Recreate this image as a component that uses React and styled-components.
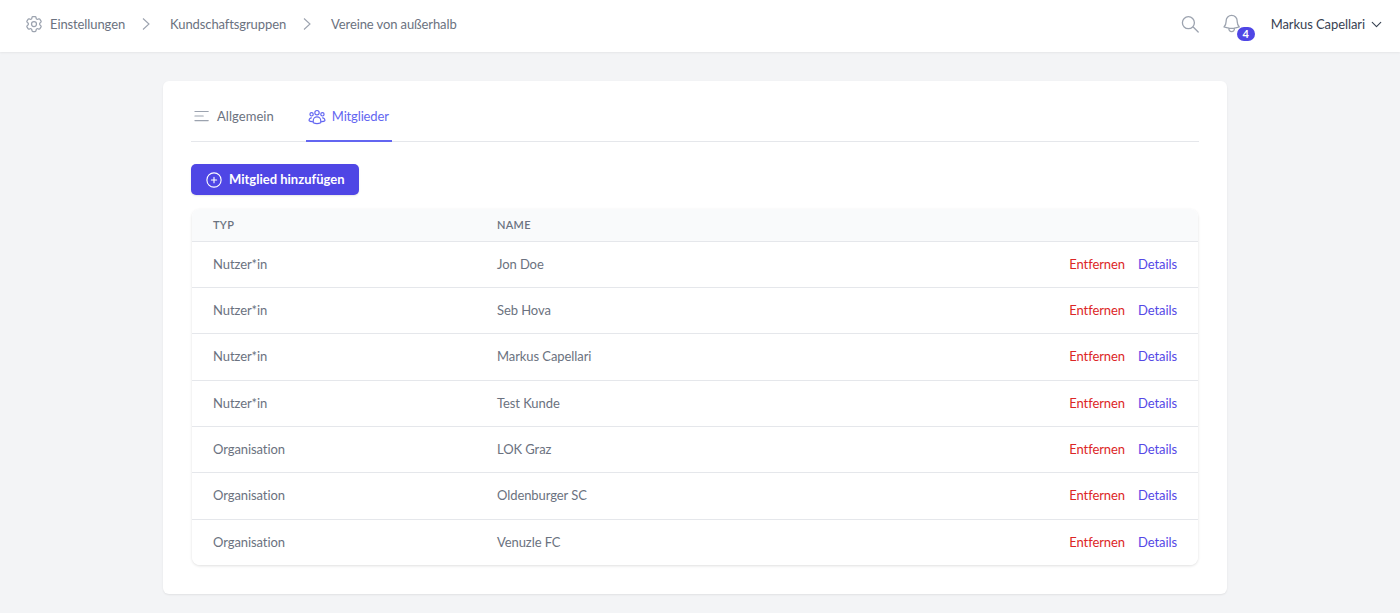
import React from "react";
import styled, { createGlobalStyle } from "styled-components";
import { ChevronDown } from "lucide-react";

const members = [
  { type: "Nutzer*in", name: "Jon Doe" },
  { type: "Nutzer*in", name: "Seb Hova" },
  { type: "Nutzer*in", name: "Markus Capellari" },
  { type: "Nutzer*in", name: "Test Kunde" },
  { type: "Organisation", name: "LOK Graz" },
  { type: "Organisation", name: "Oldenburger SC" },
  { type: "Organisation", name: "Venuzle FC" },
];

const crumbs = ["Kundschaftsgruppen", "Vereine von außerhalb"];

function Outline({ size = 24, children, ...rest }) {
  return (
    <svg
      width={size}
      height={size}
      viewBox="0 0 24 24"
      fill="none"
      stroke="currentColor"
      strokeWidth="1.5"
      strokeLinecap="round"
      strokeLinejoin="round"
      {...rest}
    >
      {children}
    </svg>
  );
}

export default function App() {
  return (
    <Page>
      <GlobalStyle />
      <TopBar>
        <Breadcrumbs>
          <Crumb>
            <Outline size={20}>
              <path d="M9.594 3.94c.09-.542.56-.94 1.11-.94h2.593c.55 0 1.02.398 1.11.94l.213 1.281c.063.374.313.686.645.87.074.04.147.083.22.127.325.196.72.257 1.075.124l1.217-.456a1.125 1.125 0 011.37.49l1.296 2.247a1.125 1.125 0 01-.26 1.431l-1.003.827c-.293.241-.438.613-.43.992a7.723 7.723 0 010 .255c-.008.378.137.75.43.991l1.004.827c.424.35.534.955.26 1.43l-1.298 2.247a1.125 1.125 0 01-1.369.491l-1.217-.456c-.355-.133-.75-.072-1.076.124a6.47 6.47 0 01-.22.128c-.331.183-.581.495-.644.869l-.213 1.281c-.09.543-.56.94-1.11.94h-2.594c-.55 0-1.019-.398-1.11-.94l-.213-1.281c-.062-.374-.312-.686-.644-.87a6.52 6.52 0 01-.22-.127c-.325-.196-.72-.257-1.076-.124l-1.217.456a1.125 1.125 0 01-1.369-.49l-1.297-2.247a1.125 1.125 0 01.26-1.431l1.004-.827c.292-.24.437-.613.43-.991a6.932 6.932 0 010-.255c.007-.38-.138-.751-.43-.992l-1.004-.827a1.125 1.125 0 01-.26-1.43l1.297-2.247a1.125 1.125 0 011.37-.491l1.216.456c.356.133.751.072 1.076-.124.072-.044.146-.086.22-.128.332-.183.582-.495.644-.869l.214-1.28z" />
              <path d="M15 12a3 3 0 11-6 0 3 3 0 016 0z" />
            </Outline>
            Einstellungen
          </Crumb>
          {crumbs.map((label) => (
            <React.Fragment key={label}>
              <Separator viewBox="0 0 10 14" aria-hidden="true">
                <path d="M2 1.500 8 7l-6 5.500" />
              </Separator>
              <Crumb>{label}</Crumb>
            </React.Fragment>
          ))}
        </Breadcrumbs>
        <TopActions>
          <IconSlot>
            <Outline size={24} strokeWidth="1.300">
              <path d="M19.200 20l-5-5M15.400 10.700a6 6 0 11-12 0 6 6 0 0112 0z" />
            </Outline>
          </IconSlot>
          <BellSlot>
            <Outline size={24} strokeWidth="1.400">
              <g transform="translate(11.650 11.350) scale(.92) translate(-12 -11.900)">
                <path d="M14.900 17.100c1.900-.2 3.700-.7 5.400-1.300-1.400-1.600-2.300-3.600-2.300-5.800V9.300A6 6 0 006 9.300V10c0 2.200-.8 4.200-2.300 5.800 1.700.6 3.500 1.100 5.400 1.300m5.800 0c-1.900.2-3.900.2-5.800 0m5.800 0a3 3 0 11-5.800 0" />
              </g>
            </Outline>
            <Badge>4</Badge>
          </BellSlot>
          <UserMenu>
            Markus Capellari
            <ChevronDown size={17} strokeWidth={1.6} />
          </UserMenu>
        </TopActions>
      </TopBar>

      <Card>
        <Tabs>
          <Tab>
            <Outline size={20} strokeWidth="1.300">
              <path d="M3.500 6.500h16M3.500 12h10M3.500 17.500h16" />
            </Outline>
            Allgemein
          </Tab>
          <Tab $active>
            <Outline size={20} strokeWidth="1.400">
              <circle cx="12" cy="8" r="2.600" />
              <circle cx="5.500" cy="10" r="2" />
              <circle cx="18.500" cy="10" r="2" />
              <path d="M7.500 20v-2.500a4.500 4.500 0 019 0V20c-3 1.400-6 1.400-9 0z" />
              <path d="M6.500 18.800c-2-.1-3.500-.6-4-1.300 0-1.900 1.200-3.300 2.800-3.300M17.500 18.800c2-.1 3.500-.6 4-1.300 0-1.900-1.200-3.300-2.800-3.300" />
            </Outline>
            Mitglieder
          </Tab>
        </Tabs>

        <AddButton type="button">
          <Outline size={18}>
            <circle cx="12" cy="12" r="9.500" />
            <path d="M12 8.500v7M8.500 12h7" />
          </Outline>
          <ButtonLabel>Mitglied hinzufügen</ButtonLabel>
        </AddButton>

        <TableWrap>
          <Table>
            <colgroup>
              <col width="284" />
              <col />
              <col width="200" />
            </colgroup>
            <thead>
              <tr>
                <HeadCell>Typ</HeadCell>
                <HeadCell>Name</HeadCell>
                <HeadCell />
              </tr>
            </thead>
            <tbody>
              {members.map((m) => (
                <Row key={m.name}>
                  <Cell>{m.type}</Cell>
                  <Cell>{m.name}</Cell>
                  <ActionCell>
                    <ActionLink $danger>Entfernen</ActionLink>
                    <ActionLink>Details</ActionLink>
                  </ActionCell>
                </Row>
              ))}
            </tbody>
          </Table>
        </TableWrap>
      </Card>
    </Page>
  );
}

const GlobalStyle = createGlobalStyle`
  html, body {
    margin: 0;
    padding: 0;
    background: #f3f4f6;
  }
  body {
    font-family: "Lato", "Noto Sans", sans-serif;
    font-size: 13px;
    letter-spacing: -0.08px;
  }
`;

const Page = styled.div`
  min-height: 613px;
  display: flex;
  flex-direction: column;
  overflow: hidden;
`;

const TopBar = styled.header`
  height: 52px;
  box-sizing: border-box;
  padding: 0 15px 4px 24px;
  background: #fff;
  box-shadow: 0 1px 2px rgba(0, 0, 0, 0.06);
  display: flex;
  align-items: center;
  justify-content: space-between;
`;

const Breadcrumbs = styled.nav`
  display: flex;
  align-items: center;
`;

const Crumb = styled.span`
  display: flex;
  align-items: center;
  gap: 6px;
  color: #6b7280;
  letter-spacing: -0.1px;

  svg {
    color: #9ca3af;
  }
`;

const Separator = styled.svg`
  width: 10px;
  height: 14px;
  margin: 0 19px 0 16px;
  fill: none;
  stroke: #9ca3af;
  stroke-width: 1.1;
`;

const TopActions = styled.div`
  display: flex;
  align-items: center;
`;

const IconSlot = styled.span`
  display: flex;
  color: #9ca3af;
  margin-right: 17px;
`;

const BellSlot = styled.span`
  position: relative;
  display: flex;
  color: #9ca3af;
  margin-right: 27px;
`;

const Badge = styled.span`
  position: absolute;
  left: 17px;
  top: 15px;
  width: 18px;
  height: 14px;
  border-radius: 7px;
  background: #4f46e5;
  color: #fff;
  font-size: 11px;
  font-weight: 700;
  line-height: 14px;
  text-align: center;
`;

const UserMenu = styled.span`
  display: flex;
  align-items: center;
  gap: 3px;
  color: #374151;
`;

const Card = styled.main`
  width: 1064px;
  margin: 29px 0 0 163px;
  box-sizing: border-box;
  padding: 16px 28px 28.5px;
  background: #fff;
  border-radius: 6px;
  box-shadow: 0 1px 2px rgba(0, 0, 0, 0.08);
`;

const Tabs = styled.div`
  display: flex;
  gap: 29px;
  height: 45px;
  box-sizing: border-box;
  border-bottom: 1px solid #e5e7eb;
`;

const Tab = styled.div`
  height: 45px;
  box-sizing: border-box;
  padding: 0 3px 5px 1px;
  display: flex;
  align-items: center;
  gap: 5px;
  letter-spacing: ${(p) => (p.$active ? "-0.15px" : "0.05px")};
  color: ${(p) => (p.$active ? "#6366f1" : "#6b7280")};
  border-bottom: 2px solid ${(p) => (p.$active ? "#6366f1" : "transparent")};

  svg {
    color: ${(p) => (p.$active ? "#6366f1" : "#9ca3af")};
  }
`;

const AddButton = styled.button`
  margin-top: 22px;
  height: 31px;
  width: 168px;
  padding: 0 0 0 14px;
  display: flex;
  align-items: center;
  gap: 6px;
  border: 0;
  border-radius: 5px;
  background: #4f46e5;
  color: #fff;
  font-family: inherit;
  font-size: 13px;
  font-weight: 700;
  box-shadow: 0 1px 2px rgba(0, 0, 0, 0.1);
`;

const ButtonLabel = styled.span`
  padding-bottom: 2px;
`;

const TableWrap = styled.div`
  margin: 14px 1px 0;
  border-radius: 8px;
  overflow: hidden;
  box-shadow: 0 1px 3px rgba(0, 0, 0, 0.13);
`;

const Table = styled.table`
  width: 100%;
  table-layout: fixed;
  border-collapse: collapse;
  background: #fff;
`;

const HeadCell = styled.th`
  height: 31.6px;
  padding: 0 21px;
  background: #f9fafb;
  border-bottom: 1px solid #e5e7eb;
  color: #6b7280;
  font-size: 11px;
  font-weight: 600;
  letter-spacing: 0.3px;
  text-align: left;
  text-transform: uppercase;
`;

const Row = styled.tr`
  height: 46.33px;
  border-bottom: 1px solid #e5e7eb;

  &:last-child {
    border-bottom: 0;
  }
`;

const Cell = styled.td`
  padding: 0 21px 1px;
  color: #6b7280;
`;

const ActionCell = styled(Cell)`
  text-align: right;
`;

const ActionLink = styled.a`
  margin-left: 13px;
  color: ${(p) => (p.$danger ? "#dc2626" : "#5548e6")};
`;
